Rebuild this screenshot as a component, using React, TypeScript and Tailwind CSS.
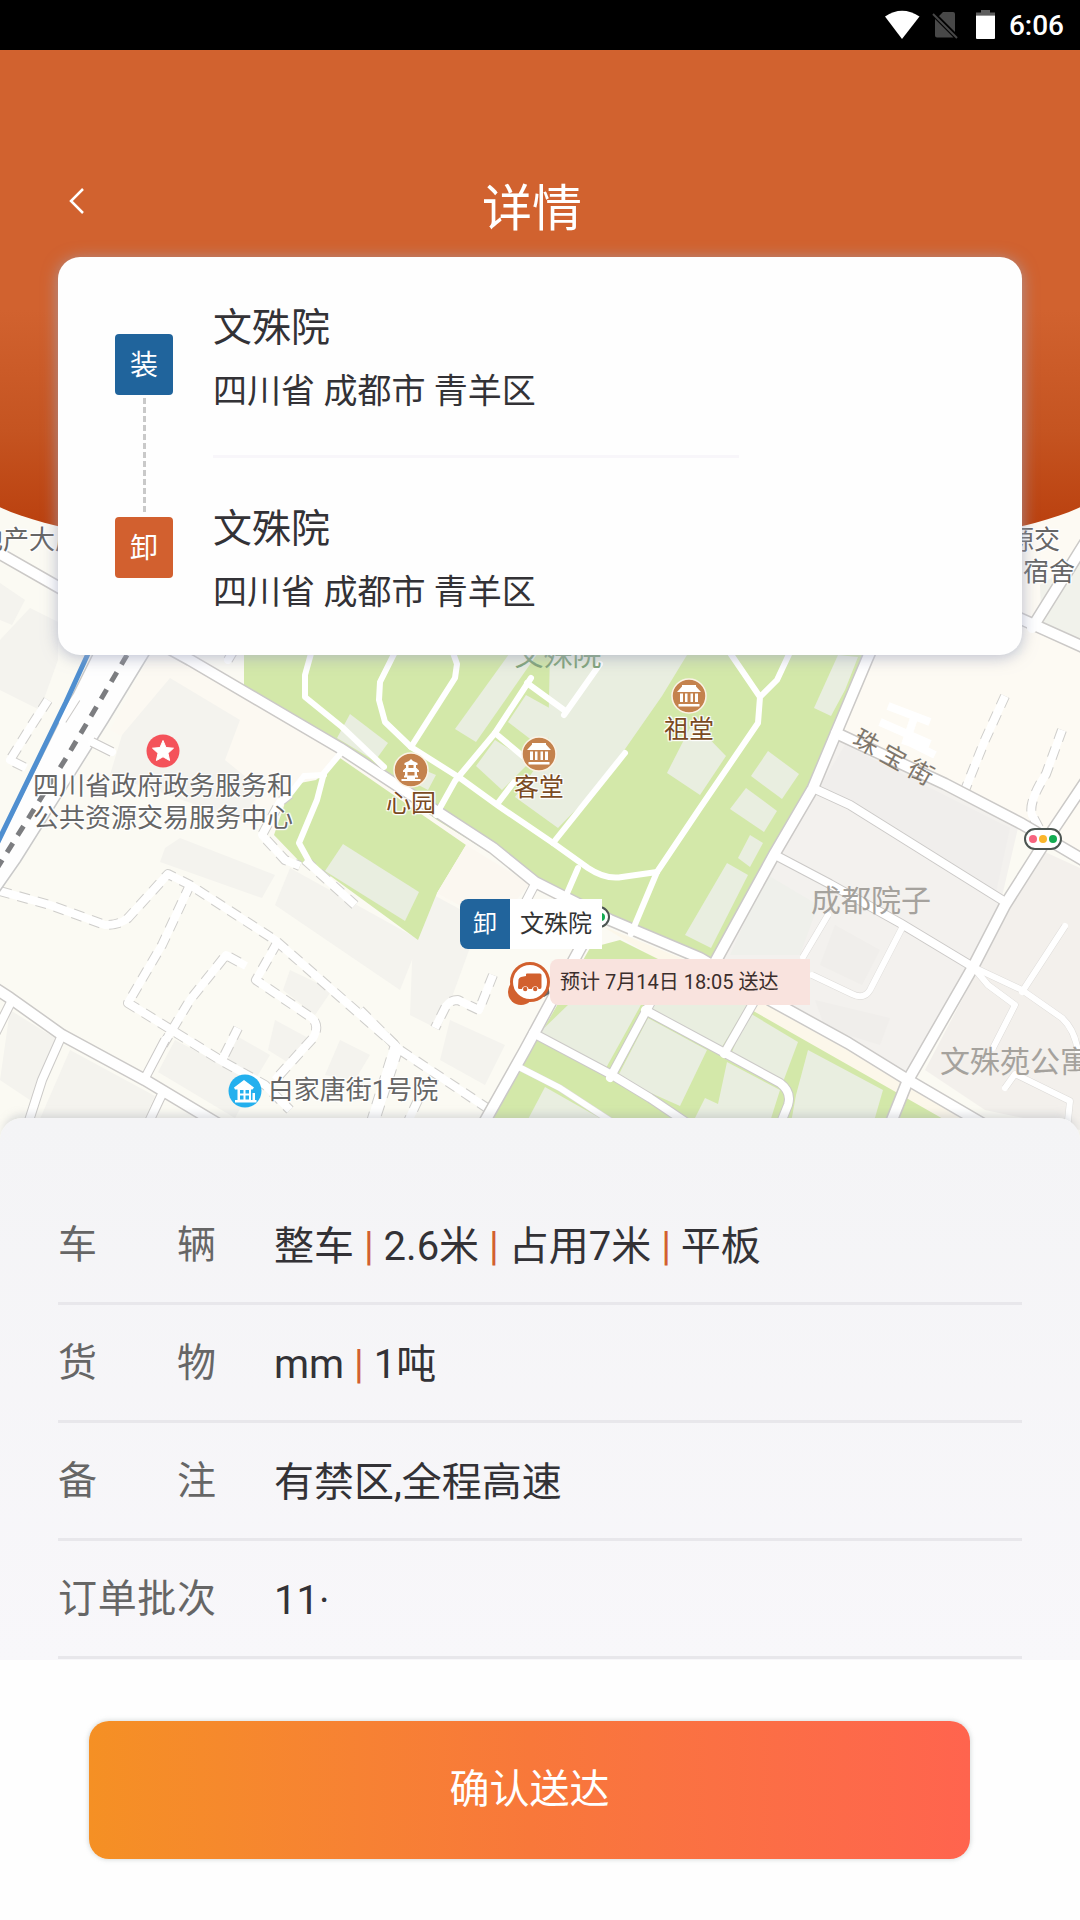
import type { ReactNode } from 'react'

const ROAD_WIDE = [
  'M-10 548 L60 588 L190 660 L340 748 L430 807 L493 848 L535 882 L610 920 L700 958 L770 1000 L848 1043 L908 1080 L990 1128',
  'M880 630 L868 657 L836 733 L813 788 L775 853 L713 966',
  'M1090 775 L1045 842 L1005 905 L973 967 L908 1080 L888 1130',
  'M836 733 L945 784 L1022 824 L1090 864',
  'M582 945 L552 1000 L525 1050 L480 1130',
  'M-10 985 L10 998 L62 1035 L145 1080 L225 1128',
  'M1090 535 L1062 580 L1032 628 M1010 614 L1090 650',
]

const ROAD_MID = [
  'M813 788 L850 805 L1002 900',
  'M775 855 L830 884 L900 923 L973 967',
  'M533 1033 L612 1075 L650 1098 L690 1125',
  'M645 1010 L723 1052 L780 1083 Q792 1092 788 1105 L778 1130',
  'M652 1000 L610 1078',
  'M755 1000 L724 1054',
  'M62 1035 L42 1080 L26 1130 M12 1000 L-6 1036',
  'M145 1078 L165 1040 M163 1092 L146 1128',
  'M92 742 L112 752 M62 720 L76 698',
  'M228 660 L240 640 M535 884 L524 905',
]

const ROAD_THIN = [
  'M515 1065 L560 1088 L612 1122',
  'M828 915 L803 957 M812 975 L852 994 Q864 1000 870 990 L902 928',
  'M973 967 L1022 990 L1062 1018 Q1075 1030 1078 1052',
  'M973 967 L988 985 L1015 1005 L993 1048 M1065 926 L1022 992',
  'M1005 1088 L1015 1074 L1070 1101 L1067 1130',
]

const PARK_PATHS = [
  'M312 650 L305 675 L305 697 L342 727 L384 767',
  'M396 650 L380 682 L379 700 L385 722 L411 747 L460 778 L500 807 L553 843 L588 868 Q606 880 622 877 L657 872',
  'M452 650 L457 664 L455 678 L411 747',
  'M531 678 L495 733 L455 781 L436 815',
  'M527 683 L564 710 M564 715 L600 664 M495 733 L525 758 M498 803 L514 782',
  'M625 753 L553 843',
  'M657 872 L700 808 L758 723 L760 697 L728 650 M760 697 L777 680 L791 650',
  'M657 872 L631 934',
  'M578 868 L565 898',
  'M340 754 L324 773 L317 800 L299 843 L310 863',
  'M324 775 L304 776 L290 794',
]

const LANES = [
  'M0 891 L50 905 L105 925 Q120 925 128 918 L168 874 L190 885 L275 940 L395 1045 L370 1125',
  'M190 885 L162 945 L128 1003 L220 1060 L265 1085 L290 1110',
  'M277 943 L256 980 L312 1018 Q320 1026 313 1038 L275 1080',
  'M163 1045 L190 1000 L226 955 L246 966 M238 1028 L222 1060',
  'M290 794 L280 802 L262 835 L285 860 L300 866 M305 860 L355 905',
  'M360 1010 L400 1050 L487 1108 M398 1050 L372 1130 M418 1100 L404 1130',
  'M493 975 L479 1010 L458 1000 Q450 1000 446 1006 L435 1028',
  'M48 700 L30 728 L10 760 L26 768',
  'M1005 696 L985 740 L963 795 M1062 730 L1046 774 Q1028 802 1032 815 L1040 830',
]

const FOOTWAYS = ['M888 706 L930 722 M880 722 L930 744 M905 745 L915 715 M905 740 L935 755']

const BLOCKS = [
  'M0 583 L25 600 L12 625 L0 620 Z',
  'M0 640 L30 608 L58 622 L58 660 L40 710 L0 690 Z',
  'M170 678 L240 720 L225 760 L262 790 L240 820 L110 775 L122 735 Z',
  'M165 848 L180 838 L275 875 L262 898 L160 862 Z',
  'M290 868 L420 940 L400 990 L275 905 Z',
  'M290 970 L332 990 L315 1015 L283 990 Z',
  'M235 1035 L270 1055 L255 1080 L225 1065 Z',
  'M340 1040 L370 1055 L355 1080 L325 1075 Z',
  'M275 1020 L312 1040 L292 1065 L268 1050 Z',
  'M175 1040 L255 1082 L235 1118 L158 1072 Z',
  'M415 885 L480 920 L440 1030 L410 1015 Z',
  'M450 1020 L505 1045 L485 1085 L440 1060 Z',
  'M10 1010 L58 1040 L30 1100 L0 1080 Z',
  'M70 1050 L155 1096 L140 1128 L36 1128 Z',
]

const GRASS_LOTS = [
  'M350 714 L388 743 L375 761 L337 738 Z',
  'M405 762 L436 775 L428 790 L405 778 Z',
  'M512 650 L540 650 L476 742 L455 729 Z',
  'M550 650 L690 650 L662 696 L600 785 L558 828 L515 797 L534 770 L548 748 Z',
  'M526 695 L562 715 L542 748 L508 722 Z',
  'M495 740 L530 762 L502 790 L476 766 Z',
  'M693 722 L726 756 L700 795 L667 773 Z',
  'M768 751 L799 774 L782 799 L751 776 Z',
  'M746 788 L777 811 L764 832 L730 809 Z',
  'M750 835 L763 843 L750 867 L738 858 Z',
  'M727 863 L748 875 L711 948 L685 935 Z',
  'M838 655 L858 657 L845 690 L831 716 L814 708 Z',
  'M343 844 L419 892 L405 921 L325 871 Z',
  'M570 1003 L642 1003 L606 1068 L540 1032 Z',
  'M655 1000 L750 1000 L722 1047 L650 1010 Z',
  'M648 1018 L707 1050 L680 1106 L617 1078 Z',
  'M748 1012 L798 1042 L783 1082 L732 1052 Z',
  'M808 1050 L883 1090 L872 1128 L790 1128 L796 1095 Z',
  'M727 1062 L780 1090 L768 1128 L690 1128 L705 1098 L718 1104 Z',
  'M545 1087 L612 1125 L525 1125 Z',
]

function MapDrawing() {
  return (
    <svg
      className="absolute inset-0 h-full w-full"
      viewBox="0 500 1080 640"
      preserveAspectRatio="xMidYMid slice"
      aria-hidden="true"
      fill="none"
      strokeLinejoin="round"
    >
      <rect y="500" width="1080" height="640" fill="#fbfaf3" />
      <path d="M190 655 L340 745 L480 850 L430 940 L300 860 L240 800 L110 730 L150 655 Z" fill="#fcf9f2" />
      <path d="M868 655 L1080 655 V860 L836 735 Z M1022 500 H1080 V655 H1022 Z" fill="#fdfaf3" />
      <path d="M1040 585 L1080 560 V645 L1042 628 Z" fill="#f1f2eb" />
      {BLOCKS.map((d) => (
        <path key={d} d={d} fill="#f4f3ee" />
      ))}
      <path d="M836 737 L1018 828 L1000 905 L908 1080 L713 966 L775 853 Z" fill="#f3f1ee" />
      <path d="M845 745 L1010 828 L996 892 L818 790 Z" fill="#f0eeec" />
      <path d="M1080 868 L1045 852 Q1035 855 1025 880 L925 1070 L985 1110 L1080 1130 Z" fill="#f3f0ec" />
      <path d="M766 874 L818 905 L800 955 L730 955 Z" fill="#eff0eb" />
      <path d="M835 925 L880 950 L862 985 L820 965 Z M815 1000 L890 1018 L880 1045 L825 1028 Z" fill="#f0eeeb" />
      <path d="M700 966 L770 1005 L908 1085 L980 1128 L945 1128 L755 1018 L600 925 Z" fill="#fcf7ea" />
      <path
        d="M244 645 H872 L836 730 L775 850 L715 962 L600 915 L530 878 L437 820 L340 750 L290 716 L244 687 Z"
        fill="#d3e8a9"
      />
      <path
        d="M340 758 L466 845 L437 893 L418 940 L325 872 L300 862 L274 835 L286 800 L300 783 L316 780 Z"
        fill="#d3e8a9"
      />
      <path d="M590 948 L620 940 L690 975 L945 1120 V1130 H484 L540 1035 Z" fill="#d3e8a9" />
      <path d="M466 845 L437 893 L495 925 L530 884 Z" fill="#fbf7f0" />
      {GRASS_LOTS.map((d) => (
        <path key={d} d={d} fill="#e9eee0" />
      ))}

      <g stroke="#cfcecb" strokeWidth="10" strokeDasharray="11 8">
        {LANES.map((d) => (
          <path key={d} d={d} />
        ))}
      </g>
      <g stroke="#ffffff" strokeWidth="8">
        {LANES.map((d) => (
          <path key={d} d={d} />
        ))}
        {FOOTWAYS.map((d) => (
          <path key={d} d={d} />
        ))}
      </g>

      <path d="M100 640 L158 640 L108 722 L20 862 L-10 905 V860 Z" fill="#fefefe" stroke="#c9c9c9" strokeWidth="1.5" />

      <g stroke="#cbc9c7">
        <g strokeWidth="13">
          {ROAD_WIDE.map((d) => (
            <path key={d} d={d} />
          ))}
        </g>
        <g strokeWidth="10">
          {ROAD_MID.map((d) => (
            <path key={d} d={d} />
          ))}
        </g>
        <g strokeWidth="7" stroke="#dddbd8">
          {ROAD_THIN.map((d) => (
            <path key={d} d={d} />
          ))}
        </g>
      </g>
      <g stroke="#ffffff" strokeLinecap="round">
        <g strokeWidth="10">
          {ROAD_WIDE.map((d) => (
            <path key={d} d={d} />
          ))}
        </g>
        <g strokeWidth="8">
          {ROAD_MID.map((d) => (
            <path key={d} d={d} />
          ))}
        </g>
        <g strokeWidth="6">
          {ROAD_THIN.map((d) => (
            <path key={d} d={d} />
          ))}
          {PARK_PATHS.map((d) => (
            <path key={d} d={d} />
          ))}
        </g>
      </g>
      <path d="M127 655 L68 755 L-4 870" stroke="#7c7d80" strokeWidth="5" strokeDasharray="11 9" />
      <path d="M92 645 L66 702 L-4 846" stroke="#4f8fd0" strokeWidth="5" />
    </svg>
  )
}

function Pin({ at, className = '', children }: { at: string; className?: string; children: ReactNode }) {
  return (
    <div className={`absolute -translate-x-1/2 -translate-y-1/2 whitespace-nowrap ${at} ${className}`}>{children}</div>
  )
}

const HALO = '[text-shadow:0_0_2px_#fff,0_0_2px_#fff,1px_1px_1px_#fff,-1px_-1px_1px_#fff,1px_-1px_1px_#fff,-1px_1px_1px_#fff]'

function HallIcon() {
  return (
    <svg width="36" height="36" viewBox="0 0 36 36" aria-hidden="true">
      <circle cx="18" cy="18" r="17" fill="#c4824d" stroke="#fbf3e6" strokeWidth="1.5" />
      <path
        d="M11 7 H25 V8.500 L30 14 H6 L11 8.500 Z M9 15.500 H12 V24 H9 Z M14 15.500 H16.500 V24 H14 Z M19.500 15.500 H22 V24 H19.500 Z M24 15.500 H27 V24 H24 Z M7.500 26 H28.500 V28.500 H7.500 Z"
        fill="#fff"
      />
    </svg>
  )
}

function PagodaIcon() {
  return (
    <svg width="36" height="36" viewBox="0 0 36 36" aria-hidden="true">
      <circle cx="18" cy="18" r="17" fill="#c4824d" stroke="#fbf3e6" strokeWidth="1.5" />
      <path
        d="M18 7 L20 9 L24.500 11 V13 H11.500 V11 L16 9 Z M13 13 H15.500 V16.500 H13 Z M20.500 13 H23 V16.500 H20.500 Z M10 18.500 L12.500 16 H23.500 L26 18.500 V20 H10 Z M12 20 H14.500 V24 H12 Z M21.500 20 H24 V24 H21.500 Z M11 23.500 H25 V25.500 H11 Z M8.500 27 H14 V25 H22 V27 H27.500 V29 H8.500 Z"
        fill="#fff"
      />
    </svg>
  )
}

function TrafficLight() {
  return (
    <div className="flex h-[22px] w-[38px] items-center justify-center gap-[2px] rounded-full border-2 border-[#4c5551] bg-white">
      <i className="h-2 w-2 rounded-full bg-[#f7647f]" />
      <i className="h-2 w-2 rounded-full bg-[#fbb62c]" />
      <i className="h-2 w-2 rounded-full bg-[#12ab51]" />
    </div>
  )
}

function MapLabels() {
  return (
    <>
      <Pin at="left-[29px] top-[40px]" className={`text-[26px] leading-8 text-[#666] ${HALO}`}>
        地产大厦
      </Pin>
      <Pin at="left-[1034px] top-[40px]" className={`text-[26px] leading-8 text-[#666] ${HALO}`}>
        源交
      </Pin>
      <Pin at="left-[1049px] top-[72px]" className={`text-[26px] leading-8 text-[#666] ${HALO}`}>
        宿舍
      </Pin>
      <Pin at="left-[558px] top-[156px]" className="text-[29px] leading-8 text-[#7fa377]">
        文殊院
      </Pin>

      <Pin at="left-[163px] top-[251px]">
        <svg width="34" height="34" viewBox="0 0 34 34" aria-hidden="true">
          <circle cx="17" cy="17" r="16.500" fill="#f4525a" />
          <path
            d="M17 6.500 L20 13.500 L27.500 14.200 L22 19.200 L23.600 26.500 L17 22.800 L10.400 26.500 L12 19.200 L6.500 14.200 L14 13.500 Z"
            fill="#fff"
            stroke="#fff"
            strokeLinejoin="round"
          />
        </svg>
      </Pin>
      <Pin at="left-[163px] top-[302px]" className={`text-center text-[26px] leading-8 text-[#666] ${HALO}`}>
        <p>四川省政府政务服务和</p>
        <p>公共资源交易服务中心</p>
      </Pin>

      <Pin at="left-[411px] top-[270px]">
        <PagodaIcon />
      </Pin>
      <Pin at="left-[411px] top-[304px]" className={`text-[25px] leading-8 text-[#7a4a22] ${HALO}`}>
        心园
      </Pin>
      <Pin at="left-[539px] top-[254px]">
        <HallIcon />
      </Pin>
      <Pin at="left-[539px] top-[288px]" className={`text-[25px] leading-8 text-[#7a4a22] ${HALO}`}>
        客堂
      </Pin>
      <Pin at="left-[689px] top-[196px]">
        <HallIcon />
      </Pin>
      <Pin at="left-[689px] top-[230px]" className={`text-[25px] leading-8 text-[#7a4a22] ${HALO}`}>
        祖堂
      </Pin>

      <Pin at="left-[893px] top-[258px]" className="rotate-[29deg] text-[25px] leading-8 text-[#7f776c]">
        珠 宝 街
      </Pin>
      <Pin at="left-[871px] top-[401px]" className="text-[30px] leading-10 text-[#a5a29d]">
        成都院子
      </Pin>
      <Pin at="left-[1015px] top-[562px]" className="text-[30px] leading-10 text-[#a5a29d]">
        文殊苑公寓
      </Pin>

      <Pin at="left-[245px] top-[591px]">
        <svg width="34" height="34" viewBox="0 0 34 34" aria-hidden="true">
          <circle cx="17" cy="17" r="16.500" fill="#24b0ee" />
          <path
            d="M16 6 L26 13.500 L24.500 15.500 H23 V26 H24.500 V19 H27 V26 H28.500 V28.500 H7 V26 H9.500 V15.500 H7 L6 13.500 Z"
            fill="#fff"
          />
          <path
            d="M12 16 H15.500 V19.500 H12 Z M17.500 16 H21 V19.500 H17.500 Z M12 21.500 H15.500 V25.500 H12 Z M17.500 21.500 H21 V25.500 H17.500 Z"
            fill="#24b0ee"
          />
        </svg>
      </Pin>
      <Pin at="left-[353px] top-[590px]" className={`text-[26px] leading-8 text-[#666] ${HALO}`}>
        白家唐街1号院
      </Pin>

      <Pin at="left-[1043px] top-[339px]">
        <TrafficLight />
      </Pin>
      <Pin at="left-[591px] top-[417px]">
        <TrafficLight />
      </Pin>

      <div className="absolute left-[460px] top-[399px] flex h-[50px] items-center text-2xl">
        <span className="flex h-full w-[50px] items-center justify-center rounded-l-lg bg-[#21649c] text-white">卸</span>
        <span className="flex h-full items-center bg-white px-[10px] text-[#333]">文殊院</span>
      </div>

      <div className="absolute left-[550px] top-[459px] flex h-[46px] w-[260px] items-center rounded-l-lg bg-[#f9e3de] pl-[10px] text-xl text-[#3b2e2c]">
        预计 7月14日 18:05 送达
      </div>
      <svg className="absolute left-[506px] top-[460px]" width="46" height="46" viewBox="0 0 46 46" aria-hidden="true">
        <path d="M36 36 L43 28 V34 L38 37 Z" fill="#666" />
        <circle cx="15" cy="32" r="13" fill="#d2602e" />
        <circle cx="24" cy="22" r="18.500" fill="#fff" stroke="#d2602e" strokeWidth="3" />
        <path
          d="M12.500 19.500 Q13 17.500 15 17 L20 16 V14.500 Q20 13.500 21 13.500 H34 Q35.500 13.500 35.500 15 V27 Q35.500 29 34 29 H32.500 A3.300 3.300 0 0 0 26 29 H22.500 A3.300 3.300 0 0 0 16 29 H13.500 Q12 29 12 27.500 Z"
          fill="#d2602e"
        />
        <circle cx="19.200" cy="29" r="2.200" fill="#d2602e" />
        <circle cx="29.200" cy="29" r="2.200" fill="#d2602e" />
      </svg>
    </>
  )
}

function StatusBar() {
  return (
    <div className="flex h-[50px] items-center justify-end bg-black pr-4 text-white">
      <svg className="h-[50px] w-[124px]" viewBox="0 0 124 50" aria-hidden="true">
        <path d="M17 39 L0 16.500 Q17 5 34.500 16.500 Z" fill="#fff" />
        <path d="M52 18 L58 12 H68 Q70 12 70 14 V32 L54 16 Z M50 19 L68.500 37.500 H52 Q50 37.500 50 35.500 Z" fill="#484848" />
        <path d="M48 14 L72 38" stroke="#484848" strokeWidth="2" />
        <path d="M96 10 H105 V12.500 H110 V15.500 H91 V12.500 H96 Z" fill="#5c5c5c" />
        <path d="M91 15.500 H110 V38 Q110 39 109 39 H92 Q91 39 91 38 Z" fill="#fff" />
      </svg>
      <span className="pt-[2px] text-[28px] font-medium">6:06</span>
    </div>
  )
}

function Stop() {
  return (
    <div className="text-[#333236]">
      <h2 className="text-[39px] leading-[60px]">文殊院</h2>
      <p className="mt-2 text-[34px] leading-[50px]">四川省 成都市 青羊区</p>
    </div>
  )
}

function RouteCard() {
  return (
    <section className="relative mx-[58px] flex gap-10 rounded-[22px] bg-[#fefefe] pl-[57px] shadow-[0_2px_16px_rgba(160,165,190,0.75)]">
      <div className="flex flex-col items-center py-[77px] text-[28px] text-white">
        <span className="flex h-[61px] w-[58px] items-center justify-center rounded-[4px] bg-[#20649c] pt-[2px]">装</span>
        <span className="my-[3px] w-[3px] flex-1 bg-[repeating-linear-gradient(to_bottom,#c9c9c9_0_6px,transparent_6px_9px)]" />
        <span className="flex h-[61px] w-[58px] items-center justify-center rounded-[4px] bg-[#d2602f] pt-[2px]">卸</span>
      </div>
      <div className="flex-1 pb-[38px] pt-[41px]">
        <Stop />
        <hr className="mb-[41px] mt-[39px] h-[3px] w-[65%] border-0 bg-[#f8f6fa]" />
        <Stop />
      </div>
    </section>
  )
}

const ROWS = [
  { label: '车辆', values: ['整车', '2.6米', '占用7米', '平板'] },
  { label: '货物', values: ['mm', '1吨'] },
  { label: '备注', values: ['有禁区,全程高速'] },
  { label: '订单批次', values: ['11·'] },
]

function OrderDetails() {
  return (
    <dl className="relative -mt-[22px] rounded-t-[22px] bg-linear-to-b from-[#f4f4f6] to-[#f8f7fa] px-[58px] pb-px pt-[69px] shadow-[0_-7px_8px_-4px_rgba(150,155,165,0.35)]">
      {ROWS.map((row) => (
        <div key={row.label} className="flex h-[118px] items-center gap-[58px] border-b-[3px] border-[#e8e7eb] pt-[2px]">
          <dt className="flex w-[158px] justify-between text-[39px] text-[#666]">
            {row.label.split('').map((char) => (
              <span key={char}>{char}</span>
            ))}
          </dt>
          <dd className="pt-[2px] text-[40px] text-[#333236]">
            {row.values.map((value, i) => (
              <span key={value}>
                {i > 0 && <span className="text-[#d2602f]"> | </span>}
                {value}
              </span>
            ))}
          </dd>
        </div>
      ))}
    </dl>
  )
}

export default function App() {
  return (
    <div className="flex min-h-screen flex-col bg-[#fefefe] font-[Roboto,'Noto_Sans_CJK_SC',sans-serif]">
      <StatusBar />
      <main className="flex flex-1 flex-col">
        <div className="relative overflow-hidden pb-[485px]">
          <div className="absolute inset-x-0 bottom-0 h-[640px] overflow-hidden">
            <MapDrawing />
            <MapLabels />
          </div>
          <div className="absolute -inset-x-[2%] top-0 h-[515px] rounded-b-[50%_80px] bg-[linear-gradient(to_bottom,#d1622f_0,#d1622f_260px,#c55421_380px,#bb4210_470px)]" />
          <header className="relative flex items-start pb-[3px] pl-[53px] pr-[117px] pt-[114px] text-white">
            <button type="button" aria-label="返回" className="mt-[13px] flex h-12 w-12 items-center justify-center">
              <svg width="16" height="28" viewBox="0 0 16 28" fill="none" stroke="currentColor" strokeWidth="2.500" aria-hidden="true">
                <path d="M14 2 L2 14 L14 26" />
              </svg>
            </button>
            <h1 className="flex-1 text-center text-[50px] leading-[90px]">详情</h1>
          </header>
          <RouteCard />
        </div>
        <OrderDetails />
        <div className="flex-1 pb-[61px] pl-[89px] pr-[110px] pt-[61px]">
          <button
            type="button"
            className="h-[138px] w-full rounded-[20px] bg-linear-to-r from-[#f59024] via-[#f8783a] to-[#ff644e] text-[40px] text-white shadow-[0_0_4px_1px_rgba(150,160,160,0.35)]"
          >
            确认送达
          </button>
        </div>
      </main>
    </div>
  )
}
